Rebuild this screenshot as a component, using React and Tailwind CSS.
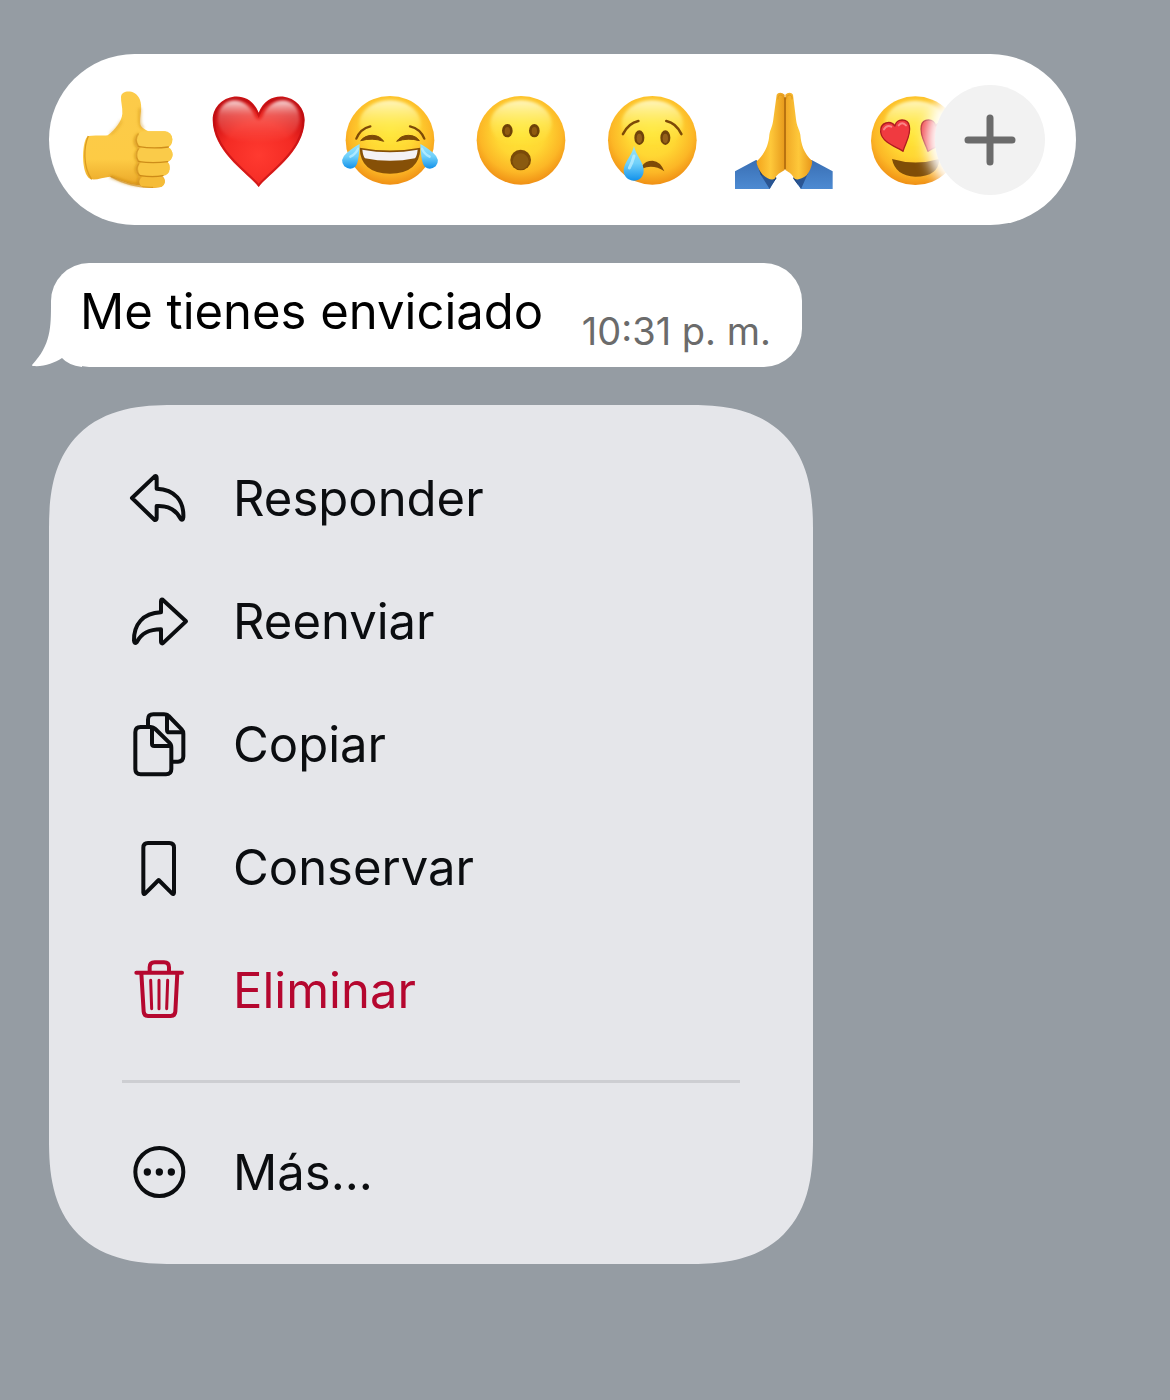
import React from "react";

function Defs() {
  return (
    <svg width="0" height="0" className="absolute" aria-hidden="true">
      <defs>
        <radialGradient id="face" cx="0.5" cy="0.4" r="0.62">
          <stop offset="0" stopColor="#ffe636" />
          <stop offset="0.45" stopColor="#ffd733" />
          <stop offset="0.75" stopColor="#fcb726" />
          <stop offset="1" stopColor="#ee8a12" />
        </radialGradient>
        <linearGradient id="shine" x1="0" y1="0" x2="0" y2="1">
          <stop offset="0" stopColor="#fffcd8" stopOpacity="0.85" />
          <stop offset="0.5" stopColor="#fff36e" stopOpacity="0.5" />
          <stop offset="1" stopColor="#ffe83d" stopOpacity="0" />
        </linearGradient>
        <linearGradient id="tear" x1="0" y1="0" x2="0" y2="1">
          <stop offset="0" stopColor="#9be4fb" />
          <stop offset="0.5" stopColor="#6fd0fa" />
          <stop offset="1" stopColor="#1291ea" />
        </linearGradient>
        <radialGradient id="heart" cx="0.5" cy="0.65" r="0.62">
          <stop offset="0" stopColor="#ff3a30" />
          <stop offset="0.6" stopColor="#f42b24" />
          <stop offset="1" stopColor="#cb1013" />
        </radialGradient>
        <linearGradient id="gloss" x1="0" y1="0" x2="0" y2="1">
          <stop offset="0" stopColor="#fff" stopOpacity="0.85" />
          <stop offset="0.35" stopColor="#ffb0a8" stopOpacity="0.4" />
          <stop offset="1" stopColor="#ff8a80" stopOpacity="0" />
        </linearGradient>
        <linearGradient id="skin" x1="0" y1="0" x2="0" y2="1">
          <stop offset="0" stopColor="#fccb4a" />
          <stop offset="0.7" stopColor="#fdcb45" />
          <stop offset="1" stopColor="#e9a425" />
        </linearGradient>
        <linearGradient id="palmLeft" x1="0" y1="0" x2="1" y2="0">
          <stop offset="0" stopColor="#f4a51c" />
          <stop offset="0.5" stopColor="#fec83a" />
          <stop offset="1" stopColor="#e79a1c" />
        </linearGradient>
        <linearGradient id="palmRight" x1="1" y1="0" x2="0" y2="0">
          <stop offset="0" stopColor="#e8961a" />
          <stop offset="0.5" stopColor="#fec83a" />
          <stop offset="1" stopColor="#f0a826" />
        </linearGradient>
        <linearGradient id="sleeve" x1="0" y1="0" x2="0" y2="1">
          <stop offset="0" stopColor="#3a6fb4" />
          <stop offset="1" stopColor="#4c8ad2" />
        </linearGradient>
        <filter id="soft" x="-20%" y="-20%" width="140%" height="140%">
          <feGaussianBlur stdDeviation="4" />
        </filter>
      </defs>
    </svg>
  );
}

function Art({ viewBox, children }) {
  return (
    <svg viewBox={viewBox} className="size-[110px] shrink-0" fill="none" aria-hidden="true">
      {children}
    </svg>
  );
}

function Face({ cx, cy, r = 133 }) {
  return (
    <>
      <circle cx={cx} cy={cy} r={r} fill="url(#face)" />
      <ellipse cx={cx} cy={cy - 50} rx="92" ry="70" fill="url(#shine)" filter="url(#soft)" />
    </>
  );
}

const thumb = (
  <Art viewBox="100 117 330 330">
    <path
      d="M146 270C165 266 188 270 204 268C228 250 246 225 248 203C249 182 243 166 244 152C246 136 268 133 284 141C300 150 307 170 304 196C302 215 300 232 304 240C310 247 318 252 326 256L372 256C404 260 404 296 386 304C404 312 402 342 384 348C396 358 392 384 368 390C382 402 376 420 358 424C340 428 316 426 298 418C262 414 236 400 210 392C192 394 172 402 156 400C136 396 130 356 130 330C131 300 136 273 146 270Z"
      fill="url(#skin)"
    />
    <g filter="url(#soft)" stroke="#c98714" strokeOpacity="0.75" strokeWidth="8" strokeLinecap="round">
      <path d="M296 266C284 278 284 294 296 304M296 312C286 326 288 338 296 346M296 354C288 366 290 378 298 386M300 396C295 404 296 412 302 416" />
      <path d="M214 392C248 404 262 414 298 416" />
      <path d="M301 190C301 220 297 236 309 246" strokeOpacity="0.5" />
      <path d="M214 262Q232 250 244 226" strokeOpacity="0.35" />
    </g>
    <rect x="290" y="256" width="108" height="47" rx="23" fill="#fbcd4c" />
    <rect x="290" y="305" width="109" height="42" rx="21" fill="#facb49" />
    <rect x="292" y="349" width="98" height="40" rx="20" fill="#f9c743" />
    <rect x="299" y="391" width="76" height="33" rx="16" fill="#f5bc38" />
    <g stroke="#c58213" strokeWidth="4" strokeLinecap="round" strokeOpacity="0.85">
      <path d="M298 302Q340 309 386 303M298 347Q340 353 384 347M302 389Q340 395 370 389" />
      <path d="M296 264Q284 280 296 301M296 309Q286 327 296 346M297 354Q288 370 299 388" strokeOpacity="0.5" />
    </g>
    <path d="M146 270C133 300 128 360 156 400" stroke="#dc9c20" strokeWidth="4" />
    <path d="M214 392C248 412 300 426 340 424" stroke="#d08d17" strokeWidth="4" strokeOpacity="0.6" />
  </Art>
);

const heart = (
  <Art viewBox="493 117 330 330">
    <path
      d="M657 423C630 385 520 320 519 222C519 150 624 118 657 200C690 118 795 150 795 222C794 320 684 385 657 423Z"
      fill="url(#heart)"
    />
    <path
      d="M657 418C632 383 524 318 523 222C523 155 624 126 657 208C690 126 791 155 791 222C790 318 682 383 657 418Z"
      stroke="#b90b10"
      strokeWidth="6"
      strokeOpacity="0.6"
    />
    <path
      d="M534 222C534 150 620 142 646 212Q657 232 668 212C694 142 780 150 780 222C776 262 740 290 657 290C574 290 538 262 534 222Z"
      fill="url(#gloss)"
      filter="url(#soft)"
    />
  </Art>
);

const joy = (
  <Art viewBox="46 27 330 330">
    <Face cx={211} cy={193} />
    <g stroke="#7d4a07" strokeWidth="7" strokeLinecap="round">
      <path d="M110 188Q122 158 152 151M314 188Q302 158 271 151" />
    </g>
    <path d="M123 194Q136 178 158 178Q180 178 192 196Q158 184 123 194ZM231 196Q244 178 266 178Q288 178 299 194Q266 184 231 196Z" fill="#7d4a07" stroke="#7d4a07" strokeWidth="3" strokeLinejoin="round" />
    <path d="M120 215Q211 232 302 215Q300 292 211 293Q122 292 120 215Z" fill="#865007" />
    <path d="M128 221Q211 236 294 221Q292 240 286 247Q211 262 136 247Q130 240 128 221Z" fill="#f4f2f5" />
    <path d="M120 204Q118 262 106 273Q90 284 74 271Q58 250 82 230Q104 212 120 204ZM302 204Q304 262 316 273Q332 284 348 271Q364 250 340 230Q318 212 302 204Z" fill="url(#tear)" />
    <path d="M115 218Q108 234 92 242M307 218Q314 234 330 242" stroke="#c5f1ff" strokeWidth="7" strokeLinecap="round" strokeOpacity="0.7" />
  </Art>
);

const wow = (
  <Art viewBox="440 27 330 330">
    <Face cx={605} cy={193} />
    <ellipse cx="564" cy="164" rx="16" ry="20" fill="#6f4207" />
    <ellipse cx="645" cy="164" rx="16" ry="20" fill="#6f4207" />
    <ellipse cx="564" cy="165" rx="8" ry="12" fill="#8f5a10" />
    <ellipse cx="645" cy="165" rx="8" ry="12" fill="#8f5a10" />
    <circle cx="604" cy="252" r="31" fill="#7a4a08" />
    <circle cx="604" cy="256" r="24" fill="#8a5a10" />
  </Art>
);

const sad = (
  <Art viewBox="23 27 330 330">
    <Face cx={189} cy={193} />
    <g stroke="#7d4a07" strokeWidth="8" strokeLinecap="round">
      <path d="M101 174Q118 141 147 135M276 174Q260 141 231 135" />
    </g>
    <ellipse cx="150" cy="185" rx="15" ry="22" fill="#70430a" />
    <ellipse cx="228" cy="185" rx="15" ry="22" fill="#70430a" />
    <ellipse cx="150" cy="187" rx="8" ry="14" fill="#94601a" />
    <ellipse cx="228" cy="187" rx="8" ry="14" fill="#94601a" />
    <path d="M158 270Q168 254 190 254Q214 256 225 286Q192 264 158 278Z" fill="#7d4a07" />
    <path d="M134 210C138 235 163 258 163 283C163 304 150 314 134 314C116 314 103 302 103 283C104 258 130 235 134 210Z" fill="url(#tear)" />
    <path d="M134 240Q128 262 120 276" stroke="#c5f1ff" strokeWidth="9" strokeLinecap="round" strokeOpacity="0.7" />
  </Art>
);

const pray = (
  <Art viewBox="416 27 330 330">
    <path d="M500 252L437 286V339H541L560 308ZM667 252L730 286V339H635L612 308Z" fill="url(#sleeve)" />
    <path d="M500 252L514 296L547 326L562 306ZM667 252L654 296L626 326L611 306Z" fill="#1c3e72" />
    <path d="M514 296L541 339L556 312ZM654 296L635 339L618 312Z" fill="#2a5592" />
    <path
      d="M562 56C566 48 578 48 586 56V282C572 290 562 296 556 308C548 314 534 308 520 296C508 282 500 262 502 256C528 232 538 205 540 176C543 160 550 150 552 130Z"
      fill="url(#palmLeft)"
    />
    <path
      d="M611 56C607 48 595 48 588 56V282C602 290 608 296 616 308C624 314 638 308 652 298C664 282 670 262 668 254C644 232 635 205 633 176C630 160 622 150 620 130Z"
      fill="url(#palmRight)"
    />
    <path d="M587 64V280" stroke="#b97310" strokeWidth="6" />
    <path d="M566 70V62Q574 52 582 62V70M592 70V62Q600 52 608 62V70" stroke="#e09a1c" strokeWidth="3" />
  </Art>
);

const love = (
  <Art viewBox="29 117 330 330">
    <Face cx={198} cy={284} />
    <path d="M161 316C146 304 98 292 94 258C92 228 124 222 137 240C140 216 176 216 180 240C186 268 168 290 161 316Z" fill="#f03a40" stroke="#ad1c20" strokeWidth="4" strokeLinejoin="round" />
    <path d="M104 250Q112 236 126 242M148 238Q158 226 170 238" stroke="#ffa6a4" strokeWidth="6" strokeLinecap="round" strokeOpacity="0.7" />
    <path d="M236 316C250 304 298 292 302 258C304 228 272 222 259 240C256 216 220 216 216 240C210 268 228 290 236 316Z" fill="#f03a40" stroke="#ad1c20" strokeWidth="4" strokeLinejoin="round" />
    <path d="M128 339Q198 360 270 339Q268 392 198 392Q138 390 128 339Z" fill="#7f4d07" />
  </Art>
);

const reactions = [
  { name: "Me gusta", art: thumb },
  { name: "Me encanta", art: heart },
  { name: "Me divierte", art: joy },
  { name: "Me asombra", art: wow },
  { name: "Me entristece", art: sad },
  { name: "Gracias", art: pray },
  { name: "Enamorado", art: love },
];

const actions = [
  {
    label: "Responder",
    viewBox: "39 9 216 216",
    icon: <path d="M134 49L66 114L134 180Q140 181 140 174V138C174 136 198 148 212 177Q219 183 220 172C222 124 196 88 140 86V54Q140 46 134 49Z" />,
  },
  {
    label: "Reenviar",
    viewBox: "39 378 216 216",
    icon: <path d="M158 419L228 484L158 550Q153 551 153 544V508C118 508 95 518 80 547Q73 553 72 542C71 494 98 459 153 457V425Q153 417 158 419Z" />,
  },
  {
    label: "Copiar",
    viewBox: "39 26 216 216",
    icon: (
      <>
        <path d="M92 80H122Q130 80 136 86L177 126Q184 132 184 142V206Q184 222 168 222H92Q76 222 76 206V96Q76 80 92 80Z" />
        <path d="M126 82V130Q126 137 133 137H181" />
        <path d="M114 78V58Q114 42 130 42H162Q170 42 176 47L215 87Q220 92 220 100V168Q220 184 204 184H190" />
        <path d="M171 44V88Q171 96 178 96H218" />
      </>
    ),
  },
  {
    label: "Conservar",
    viewBox: "39 395 216 216",
    icon: <path d="M114 428H178Q192 428 192 442V577Q191 584 186 579L146 539L106 579Q101 584 100 577V442Q100 428 114 428Z" />,
  },
  {
    label: "Eliminar",
    viewBox: "39 45 216 216",
    danger: true,
    icon: (
      <>
        <path d="M79 98H216M119 98V82Q119 67 134 67H162Q177 67 177 82V98M94 99L101 215Q102 228 114 228H182Q195 228 196 215L202 99" />
        <path strokeWidth="9" d="M122 121L125 206M147 121V206M173 121L170 206" />
      </>
    ),
  },
];

const more = {
  label: "Más...",
  viewBox: "39 590 216 216",
  icon: (
    <>
      <circle cx="148" cy="695" r="72" />
      <g fill="currentColor" stroke="none">
        <circle cx="112" cy="695" r="11" />
        <circle cx="148" cy="695" r="11" />
        <circle cx="184" cy="695" r="11" />
      </g>
    </>
  ),
};

function MenuItem({ label, viewBox, icon, danger }) {
  return (
    <button
      type="button"
      role="menuitem"
      className={
        danger
          ? "flex h-[123px] w-full items-center gap-[38px] pl-[74px] text-left text-[#b5072f]"
          : "flex h-[123px] w-full items-center gap-[38px] pl-[74px] text-left text-[#0b0d10]"
      }
    >
      <svg
        viewBox={viewBox}
        className="size-[72px] shrink-0"
        fill="none"
        stroke="currentColor"
        strokeWidth="12"
        strokeLinecap="round"
        strokeLinejoin="round"
        aria-hidden="true"
      >
        {icon}
      </svg>
      <span className="text-[49px] leading-[60px]">{label}</span>
    </button>
  );
}

export default function App() {
  return (
    <main className="flex min-h-screen flex-col items-start bg-[#959ca3] pt-[54px] pr-[94px] pb-[54px] pl-[49px] font-['Inter',sans-serif]">
      <Defs />
      <div className="relative flex h-[171px] w-full items-center overflow-hidden rounded-full bg-white pl-[13px]">
        {reactions.map((r) => (
          <button key={r.name} type="button" aria-label={r.name} className="flex w-[131px] shrink-0 justify-center">
            {r.art}
          </button>
        ))}
        <button
          type="button"
          aria-label="Más reacciones"
          className="absolute right-[31px] flex size-[110px] items-center justify-center rounded-full bg-[#f2f2f2] shadow-[0_0_14px_9px_#fff]"
        >
          <svg viewBox="0 0 52 52" className="size-[52px]" fill="none" stroke="#6b6b6b" strokeWidth="7" strokeLinecap="round" aria-hidden="true">
            <path d="M26 4V48M4 26H48" />
          </svg>
        </button>
      </div>

      <div className="relative mt-[38px] ml-[2px] flex w-[751px] max-w-full justify-between rounded-[38px] bg-white pr-[31px] pl-[29px]">
        <svg viewBox="0 0 50 64" className="absolute bottom-0 -left-[19px] h-[64px] w-[50px]" fill="#fff" aria-hidden="true">
          <path d="M19 0C19 24 19 42 0 62Q0 63 1 63C12 64 22 60 30 55Q36 62 50 64V0Z" />
        </svg>
        <p className="relative pt-[19px] pb-[25px] text-[49px] leading-[60px] text-black">Me tienes enviciado</p>
        <time className="relative self-end pb-[14px] text-[38px] leading-[44px] text-[#6b6b6b]">10:31 p. m.</time>
      </div>

      <div
        role="menu"
        className="mt-[38px] w-[764px] max-w-full rounded-[100px] bg-[#e5e6ea] pt-[32px] pb-[30px] supports-[corner-shape:squircle]:rounded-[124px] supports-[corner-shape:squircle]:[corner-shape:superellipse(1.35)]"
      >
        {actions.map((a) => (
          <MenuItem key={a.label} {...a} />
        ))}
        <hr className="my-[28px] mr-[73px] ml-[73px] h-[3px] border-0 bg-[#cdced2]" />
        <MenuItem {...more} />
      </div>
    </main>
  );
}
